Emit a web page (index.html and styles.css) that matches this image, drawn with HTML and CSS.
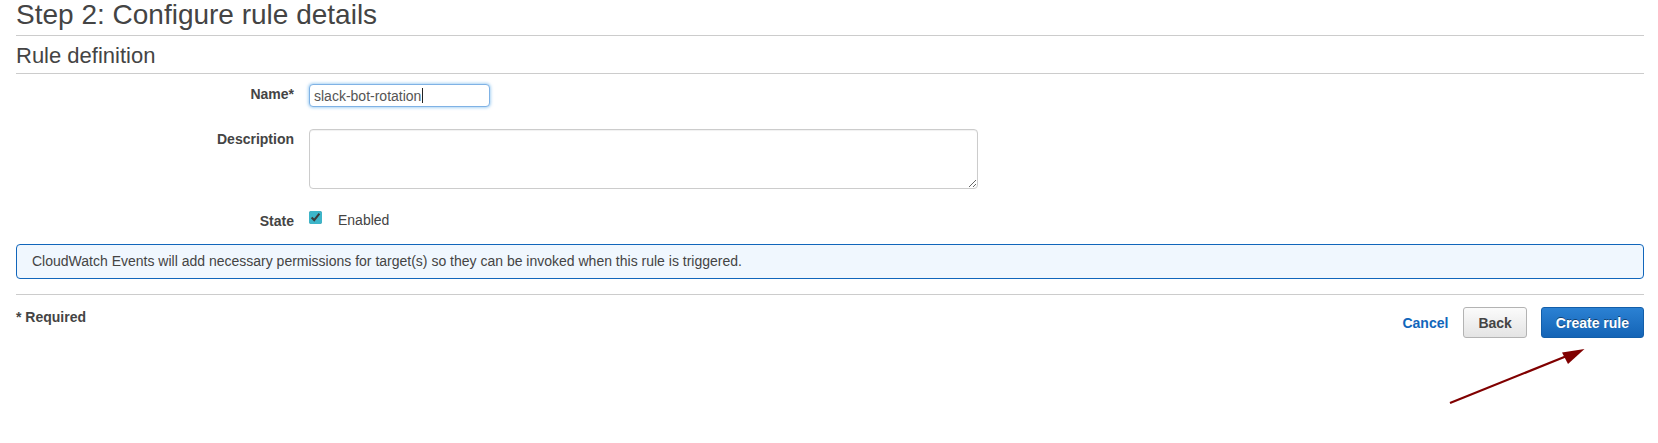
FILE: index.html
```html
<!DOCTYPE html>
<html lang="en">
<head>
<meta charset="utf-8">
<title>Step 2: Configure rule details</title>
<link rel="stylesheet" href="styles.css">
</head>
<body>
<div class="page">
  <h1 class="title">Step 2: Configure rule details</h1>
  <h2 class="section">Rule definition</h2>
  <div class="form">
    <div class="row">
      <label class="label">Name*</label>
      <div class="control">
        <div class="field focused"><span>slack-bot-rotation</span><span class="caret"></span></div>
      </div>
    </div>
    <div class="row">
      <label class="label">Description</label>
      <div class="control">
        <textarea class="textarea"></textarea>
      </div>
    </div>
    <div class="row">
      <label class="label">State</label>
      <div class="control state">
        <input type="checkbox" class="check" checked>
        <span class="check-text">Enabled</span>
      </div>
    </div>
  </div>
  <div class="info">CloudWatch Events will add necessary permissions for target(s) so they can be invoked when this rule is triggered.</div>
  <div class="divider"></div>
  <div class="footer">
    <div class="required">* Required</div>
    <div class="actions">
      <a class="link-btn">Cancel</a>
      <button class="btn btn-default">Back</button>
      <button class="btn btn-primary">Create rule</button>
    </div>
  </div>
</div>
<svg class="annotation" width="1658" height="443" viewBox="0 0 1658 443">
  <line x1="1450" y1="403" x2="1568" y2="355.5" stroke="#800000" stroke-width="2.2"/>
  <polygon points="1584.5,349 1562,352.5 1568,364" fill="#800000"/>
</svg>
</body>
</html>
```

FILE: styles.css
```css
html, body {
  margin: 0;
  padding: 0;
  background: #ffffff;
}
body {
  position: relative;
  font-family: "Liberation Sans", Arial, sans-serif;
  font-size: 14px;
  color: #444444;
  width: 1658px;
  height: 443px;
  overflow: hidden;
}
.page {
  padding: 0 14px 0 16px;
}
.title {
  margin: 0;
  font-size: 28px;
  font-weight: normal;
  line-height: 29px;
  color: #444444;
  padding-bottom: 6px;
  border-bottom: 1px solid #cccccc;
}
.section {
  margin: 7px 0 0;
  font-size: 22px;
  font-weight: normal;
  line-height: 25px;
  color: #444444;
  padding-bottom: 5px;
  border-bottom: 1px solid #cccccc;
}
.form {
  padding-top: 10px;
  display: flex;
  flex-direction: column;
  gap: 22px;
}
.row {
  display: grid;
  grid-template-columns: 278px 1fr;
  column-gap: 15px;
  align-items: start;
}
.label {
  text-align: right;
  font-weight: bold;
  line-height: 16px;
  padding-top: 2px;
  color: #444444;
}
.control {
  display: flex;
}
.field {
  box-sizing: border-box;
  width: 181px;
  height: 23px;
  border: 1px solid #7fb2e5;
  border-radius: 4px;
  padding: 0 4px;
  display: flex;
  align-items: center;
  color: #555555;
  line-height: 16px;
  background: #ffffff;
}
.field.focused {
  box-shadow: 0 0 3px 1px rgba(102, 175, 233, 0.55);
}
.caret {
  display: inline-block;
  width: 1px;
  height: 15px;
  background: #222222;
  margin-left: 1px;
}
.textarea {
  box-sizing: border-box;
  width: 669px;
  height: 60px;
  border: 1px solid #cccccc;
  border-radius: 4px;
  box-shadow: inset 0 1px 1px rgba(0, 0, 0, 0.06);
  font-family: "Liberation Sans", Arial, sans-serif;
  font-size: 14px;
  padding: 4px;
  margin: 0;
  display: block;
}
.state {
  align-items: flex-start;
  gap: 16px;
}
.check {
  width: 13px;
  height: 13px;
  margin: 0;
  accent-color: #3db5c9;
}
.check-text {
  line-height: 16px;
  padding-top: 1px;
  color: #444444;
}
.info {
  margin-top: 15px;
  border: 1px solid #1166bb;
  border-radius: 4px;
  background: #f0f7fe;
  padding: 8px 15px;
  line-height: 17px;
  color: #444444;
}
.divider {
  margin-top: 15px;
  height: 1px;
  background: #cccccc;
}
.footer {
  margin-top: 12px;
  display: flex;
  justify-content: space-between;
  align-items: flex-start;
}
.required {
  font-weight: bold;
  line-height: 16px;
  padding-top: 2px;
  color: #444444;
}
.actions {
  display: flex;
  align-items: center;
}
.link-btn {
  font-weight: bold;
  color: #1166bb;
  line-height: 16px;
  margin-right: 15px;
  cursor: pointer;
}
.btn {
  box-sizing: border-box;
  height: 31px;
  padding: 0 14px;
  border-radius: 3px;
  font-family: "Liberation Sans", Arial, sans-serif;
  font-size: 14px;
  font-weight: bold;
  cursor: pointer;
}
.btn-default {
  background: linear-gradient(#fbfbfb, #e4e4e4);
  border: 1px solid #b3b3b3;
  color: #444444;
  margin-right: 14px;
}
.btn-primary {
  background: linear-gradient(#2b81d3, #1464b6);
  border: 1px solid #135ea9;
  color: #ffffff;
  text-shadow: 0 -1px 0 rgba(0, 0, 0, 0.45);
}
.annotation {
  position: absolute;
  top: 0;
  left: 0;
  pointer-events: none;
}
```
